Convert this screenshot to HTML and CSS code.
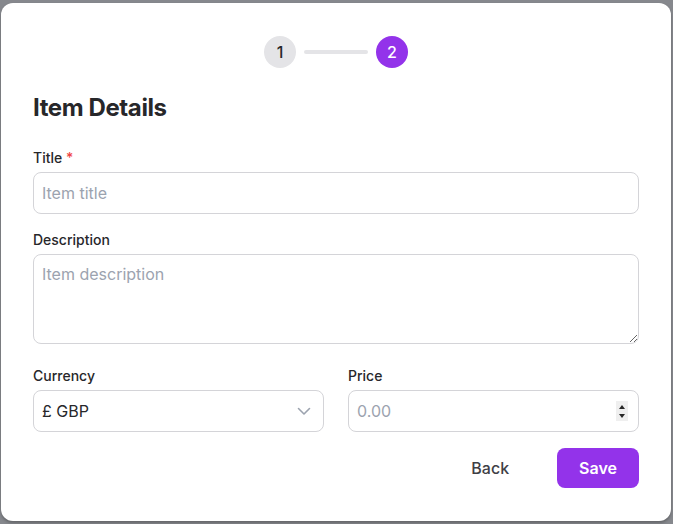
FILE: index.html
```html
<!DOCTYPE html>
<html lang="en">
<head>
    <meta charset="UTF-8">
    <meta name="viewport" content="width=device-width, initial-scale=1.0">
    <title>Item Details</title>
    <link rel="stylesheet" href="styles.css">
</head>
<body>

    <!-- Modal card -->
    <div class="card">

        <!-- Step indicator -->
        <div class="steps">
            <span class="step">1</span>
            <span class="step-line"></span>
            <span class="step active">2</span>
        </div>

        <h2 class="heading">Item Details</h2>

        <div class="field">
            <label class="label" for="title">Title <span class="required">*</span></label>
            <input class="input" id="title" type="text" placeholder="Item title">
        </div>

        <div class="field field-wide">
            <label class="label" for="desc">Description</label>
            <textarea class="input textarea" id="desc" placeholder="Item description"></textarea>
        </div>

        <div class="row">
            <div class="col">
                <label class="label" for="currency">Currency</label>
                <div class="box">
                    <select class="box-control" id="currency">
                        <option>£ GBP</option>
                        <option>$ USD</option>
                        <option>€ EUR</option>
                    </select>
                    <svg class="chevron" width="16" height="16" viewBox="0 0 16 16" fill="none">
                        <path d="M2.5 5.5 L8 11 L13.5 5.5" stroke="#9ca3af" stroke-width="1.6" stroke-linecap="round" stroke-linejoin="round"/>
                    </svg>
                </div>
            </div>
            <div class="col">
                <label class="label" for="price">Price</label>
                <div class="box">
                    <input class="box-control" id="price" type="text" placeholder="0.00">
                    <span class="spinner">
                        <span class="tri up"></span>
                        <span class="tri down"></span>
                    </span>
                </div>
            </div>
        </div>

        <!-- Actions -->
        <div class="actions">
            <button class="btn btn-back">Back</button>
            <button class="btn btn-save">Save</button>
        </div>
    </div>

</body>
</html>
```

FILE: styles.css
```css
/* General Styles */
* {
    box-sizing: border-box;
}

body {
    margin: 0;
    padding: 3px 2px 3px 1px;
    font-family: Inter, "Noto Sans", Arial, sans-serif;
    background-color: rgb(134, 136, 141);
    color: rgb(39, 39, 42);
}

/* Modal card */
.card {
    background-color: rgb(255, 255, 255);
    border-radius: 12px;
    padding: 33px 32px;
    box-shadow: 0 2px 3px rgba(0, 0, 0, .25);
}

/* Step indicator */
.steps {
    display: flex;
    justify-content: center;
    align-items: center;
    gap: 8px;
}

.step {
    width: 32px;
    height: 32px;
    border-radius: 50%;
    background-color: rgb(228, 228, 231);
    color: rgb(39, 39, 42);
    display: flex;
    justify-content: center;
    align-items: center;
    font-size: 16px;
    font-weight: 500;
}

.step.active {
    background-color: rgb(147, 51, 234);
    color: rgb(255, 255, 255);
}

.step-line {
    width: 64px;
    height: 4px;
    border-radius: 2px;
    background-color: rgb(228, 228, 231);
}

.heading {
    margin: 24px 0 24px;
    font-size: 24px;
    line-height: 32px;
    font-weight: 700;
    letter-spacing: -0.4px;
}

/* Form fields */
.field {
    margin-bottom: 16px;
}

.field-wide {
    margin-bottom: 22px;
}

.label {
    display: block;
    margin-bottom: 4px;
    font-size: 14px;
    line-height: 20px;
    font-weight: 500;
    color: rgb(39, 39, 42);
}

.required {
    color: rgb(239, 68, 68);
}

.input {
    display: block;
    width: 100%;
    height: 42px;
    padding: 10px 8px;
    font-family: inherit;
    font-size: 16px;
    line-height: 20px;
    color: rgb(39, 39, 42);
    border: 1px solid rgb(212, 212, 216);
    border-radius: 8px;
    outline: none;
}

.input::placeholder,
.box-control::placeholder {
    color: rgb(156, 163, 175);
}

.textarea {
    height: 90px;
    resize: vertical;
    padding-top: 9px;
}

/* Currency / price row */
.row {
    display: grid;
    grid-template-columns: 1fr 1fr;
    gap: 24px;
}

.box {
    display: flex;
    align-items: center;
    height: 42px;
    padding: 0 12px 0 8px;
    border: 1px solid rgb(212, 212, 216);
    border-radius: 8px;
}

.box-control {
    flex: 1;
    min-width: 0;
    border: none;
    outline: none;
    padding: 0;
    background: transparent;
    font-family: inherit;
    font-size: 16px;
    color: rgb(39, 39, 42);
    appearance: none;
    -webkit-appearance: none;
}

.chevron {
    margin-right: -1px;
}

.spinner {
    width: 12px;
    height: 20px;
    background-color: rgb(239, 239, 239);
    display: flex;
    flex-direction: column;
    justify-content: center;
    align-items: center;
    gap: 5px;
    margin-right: -2px;
}

.tri {
    width: 0;
    height: 0;
    border-left: 3.5px solid transparent;
    border-right: 3.5px solid transparent;
}

.tri.up {
    border-bottom: 4px solid rgb(40, 40, 40);
}

.tri.down {
    border-top: 4px solid rgb(40, 40, 40);
}

/* Actions */
.actions {
    display: flex;
    justify-content: flex-end;
    gap: 24px;
    margin-top: 16px;
}

.btn {
    height: 40px;
    padding: 0 24px;
    font-family: inherit;
    font-size: 16px;
    border: none;
    border-radius: 8px;
    cursor: pointer;
}

.btn-back {
    background: none;
    color: rgb(63, 63, 70);
    font-weight: 500;
}

.btn-save {
    padding: 0 22px;
    background-color: rgb(147, 51, 234);
    color: rgb(255, 255, 255);
    font-weight: 600;
}

.btn-save:hover {
    background-color: rgb(126, 34, 206);
}
```
